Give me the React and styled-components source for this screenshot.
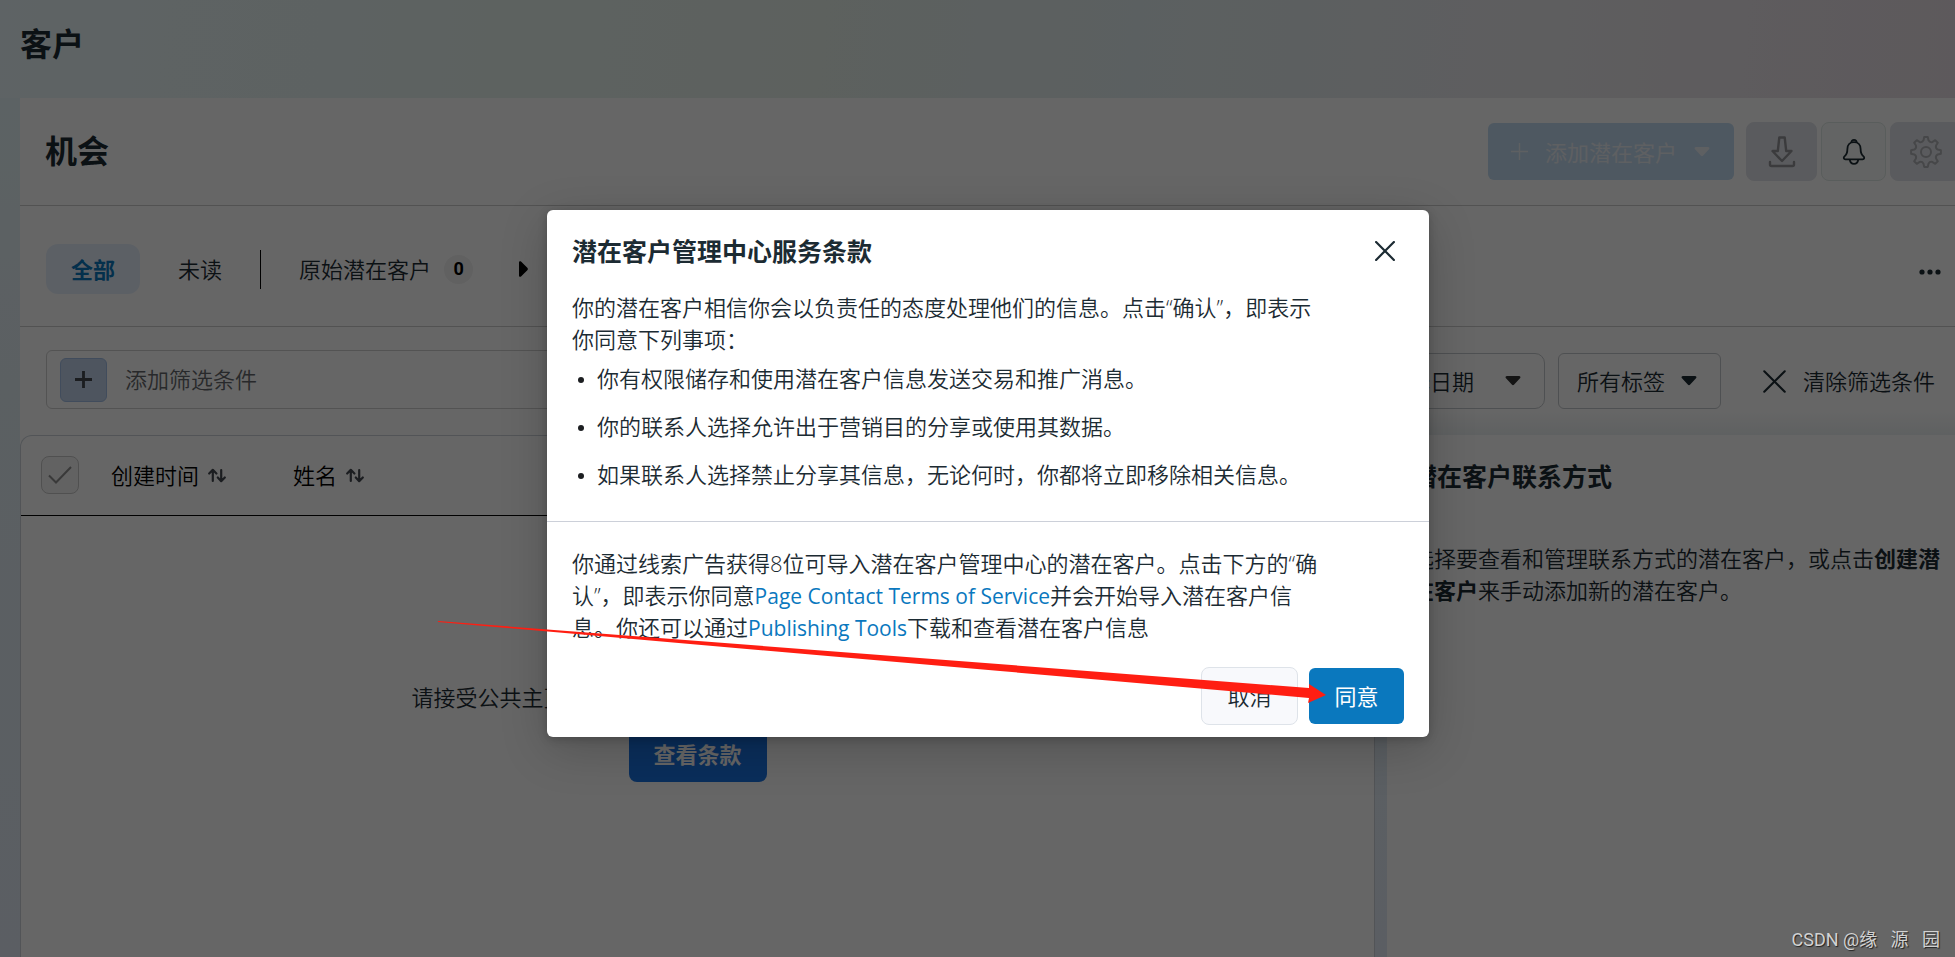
import React from "react";
import styled, { createGlobalStyle } from "styled-components";

const Global = createGlobalStyle`
  *, *::before, *::after { box-sizing: border-box; }
  body { margin: 0; }
  body, button, input, select {
    font-family: "Open Sans", "Noto Sans CJK SC", sans-serif;
    font-size: 22px;
    font-weight: 350;
    line-height: 32px;
    color: #1c2b33;
  }
  button { cursor: pointer; }
  h1, h2, h3, p, ul { margin: 0; padding: 0; }
`;

const Page = styled.div`
  position: relative;
  display: flex;
  flex-direction: column;
  min-height: 100vh;
  overflow: hidden;
  background: linear-gradient(180deg, #e8f8fa 0%, #e4eff6 40%, #e3ecf7 100%);
`;

const PageHeader = styled.header`
  height: 98px;
  padding: 28px 20px 0;
  background: linear-gradient(95deg, #ebf8fc 0%, #e8f5f1 25%, #e8f2ec 42%, #e4f0f2 58%, #ebebee 78%, #e9dfe6 100%);
`;

const Heading = styled.h1`
  padding-bottom: 2px;
  font-size: 32px;
  line-height: 32px;
  font-weight: 700;
`;

const Main = styled.main`
  flex: 1;
  display: flex;
  flex-direction: column;
  margin-left: 20px;
`;

const Card = styled.section`
  background: #fff;
`;

const Bar = styled.div`
  display: flex;
  align-items: center;
  border-bottom: 1px solid #ccc;
`;

const TitleBar = styled(Bar)`
  height: 108px;
  padding-left: 25px;
  justify-content: space-between;
`;

const Actions = styled.div`
  display: flex;
  align-items: center;
  gap: 4px;
  margin-right: -6px;
`;

const AddButton = styled.button`
  display: flex;
  align-items: center;
  gap: 17px;
  width: 246px;
  height: 57px;
  margin-right: 8px;
  padding: 0 23px;
  border: 0;
  border-radius: 6px;
  background: #c2dcf2;
  color: #eceff5;
  font-weight: 400;
`;

const SquareButton = styled.button`
  display: grid;
  place-items: center;
  width: ${(p) => p.$width}px;
  height: 59px;
  padding: 0;
  border: 1px solid ${(p) => p.$border};
  border-radius: 8px;
  background: ${(p) => p.$bg};
  color: ${(p) => p.$color};
`;

const TabBar = styled(Bar)`
  height: 121px;
  padding: 6px 14px 0 26px;
`;

const Tabs = styled.nav`
  display: flex;
  align-items: center;
  gap: 13px;
`;

const Tab = styled.button`
  height: 50px;
  padding: 0 25px;
  border: 0;
  border-radius: 12px;
  background: ${(p) => (p.$active ? "#e7f0fd" : "transparent")};
  color: ${(p) => (p.$active ? "#0a78be" : "#1c2b33")};
  font-weight: ${(p) => (p.$active ? 700 : 350)};
`;

const Separator = styled.span`
  width: 1px;
  height: 39px;
  margin-right: 25px;
  background: #000;
`;

const StageTab = styled.button`
  display: flex;
  align-items: center;
  gap: 13px;
  padding: 0;
  border: 0;
  background: none;
`;

const Badge = styled.span`
  width: 29px;
  height: 29px;
  border-radius: 50%;
  background: #f2f2f2;
  color: #000;
  font-family: Roboto, sans-serif;
  font-size: 18px;
  line-height: 28px;
  font-weight: 700;
`;

const PlainButton = styled.button`
  display: flex;
  align-items: center;
  gap: 17px;
  padding: 0;
  border: 0;
  background: none;
`;

const NextButton = styled(PlainButton)`
  margin-left: 33px;
`;

const MoreButton = styled(PlainButton)`
  margin-left: auto;
  padding-top: 5px;
`;

const FilterBar = styled.div`
  display: flex;
  align-items: flex-end;
  gap: 13px;
  padding: 23px 20px 26px 26px;
  background: linear-gradient(180deg, #fff, #edf2f3) right bottom / 580px 24px no-repeat;
`;

const SearchBox = styled.div`
  flex: 1;
  display: flex;
  align-items: center;
  gap: 18px;
  height: 59px;
  padding: 0 13px;
  border: 1px solid #d0d0d0;
  border-radius: 6px;
`;

const PlusButton = styled.button`
  display: grid;
  place-items: center;
  width: 47px;
  height: 44px;
  padding: 0;
  border: 1px solid #a3bfe6;
  border-radius: 6px;
  background: #c2d4ee;
  color: #444950;
`;

const FilterInput = styled.input`
  flex: 1;
  height: 44px;
  padding: 0 0 2px;
  border: 0;
  background: none;
  &::placeholder { color: #65676b; opacity: 1; }
`;

const SelectBox = styled.div`
  position: relative;
  width: ${(p) => p.$width}px;
  height: 56px;
`;

const Select = styled.select`
  width: 100%;
  height: 100%;
  padding: 0 18px;
  appearance: none;
  border: 1px solid #c4c8cc;
  border-radius: ${(p) => p.$radius}px;
  background: transparent;
`;

const SelectCaret = styled.span`
  position: absolute;
  top: 0;
  bottom: 0;
  right: 24px;
  display: flex;
  align-items: center;
  pointer-events: none;
`;

const ClearButton = styled(PlainButton)`
  height: 56px;
  margin-left: 29px;
`;

const Columns = styled.div`
  flex: 1;
  display: flex;
  align-items: stretch;
`;

const ListWrap = styled.div`
  flex: 1;
  display: flex;
  background: #fff;
`;

const ListPanel = styled.section`
  flex: 1;
  border: 1px solid #ccd3da;
  border-bottom: 0;
  border-top-left-radius: 12px;
  background: #fff;
`;

const Table = styled.table`
  width: 100%;
  border-collapse: collapse;
  border-bottom: 1px solid #000;
  th {
    height: 79px;
    padding: 0;
    text-align: left;
    color: #000;
  }
`;

const CheckCell = styled.th`
  width: 90px;
`;

const CreatedCell = styled.th`
  width: 182px;
`;

const CheckLabel = styled.label`
  position: relative;
  display: block;
  width: 38px;
  height: 38px;
  margin-left: 20px;
  svg {
    position: absolute;
    inset: 0;
    margin: auto;
    pointer-events: none;
  }
`;

const Checkbox = styled.input`
  display: block;
  appearance: none;
  width: 38px;
  height: 38px;
  margin: 0;
  border: 1px solid #c8c8c8;
  border-radius: 8px;
  background: #f5f5f5;
`;

const SortButton = styled(PlainButton)`
  gap: 9px;
  color: #000;
`;

const Empty = styled.div`
  display: flex;
  flex-direction: column;
  align-items: center;
  gap: 13px;
  padding-top: 165px;
`;

const TermsButton = styled.button`
  width: 138px;
  height: 56px;
  padding: 0;
  border: 0;
  border-radius: 8px;
  background: #1b74e4;
  color: #fff;
  font-weight: 700;
`;

const DetailPanel = styled.aside`
  width: 568px;
  margin-left: 12px;
  padding: 25px 0 0 25px;
  background: #fff;
`;

const DetailTitle = styled.h2`
  font-size: 25px;
  line-height: 32px;
  font-weight: 700;
`;

const DetailText = styled.p`
  width: 530px;
  padding-top: 50px;
  b { font-weight: 700; }
`;

const Overlay = styled.div`
  position: absolute;
  inset: 0;
  display: flex;
  align-items: center;
  justify-content: center;
  padding: 0 0 10px 21px;
  background: rgba(0, 0, 0, 0.6);
`;

const Dialog = styled.div`
  position: relative;
  width: 882px;
  border-radius: 6px;
  background: #fff;
  box-shadow: 0 12px 48px rgba(0, 0, 0, 0.2), 0 2px 10px rgba(0, 0, 0, 0.2);
`;

const DialogHeader = styled.div`
  display: flex;
  align-items: center;
  justify-content: space-between;
  padding: 24px 34px 0 25px;
`;

const DialogTitle = styled.h2`
  font-size: 25px;
  line-height: 34px;
  font-weight: 700;
`;

const Terms = styled.div`
  padding: 23px 105px 31px 25px;
  border-bottom: 1px solid #ccd0d9;
`;

const TermsList = styled.ul`
  display: flex;
  flex-direction: column;
  gap: 16px;
  padding: 7px 0 0 6px;
  list-style: none;
`;

const Term = styled.li`
  display: flex;
  align-items: center;
  gap: 13px;
  &::before {
    content: "";
    width: 6px;
    height: 6px;
    margin-top: 4px;
    border-radius: 50%;
    background: #1c1e21;
  }
`;

const Consent = styled.p`
  padding: 25px 105px 0 25px;
`;

const Link = styled.a`
  color: #0a78be;
  font-size: 21px;
  line-height: 21px;
  font-weight: 400;
  text-decoration: none;
`;

const DialogFooter = styled.div`
  display: flex;
  align-items: center;
  justify-content: flex-end;
  gap: 11px;
  padding: 24px 25px 12px;
`;

const CancelButton = styled.button`
  width: 97px;
  height: 58px;
  padding: 0;
  border: 1px solid #dee3e9;
  border-radius: 8px;
  background: #f8f9fc;
`;

const AgreeButton = styled.button`
  width: 95px;
  height: 56px;
  padding: 0;
  border: 0;
  border-radius: 6px;
  background: #0a78be;
  color: #fff;
  font-weight: 400;
`;

const Pointer = styled.svg`
  position: absolute;
  left: -109px;
  top: 410px;
  pointer-events: none;
`;

const Watermark = styled.div`
  position: absolute;
  right: 15px;
  bottom: 2px;
  color: #d2d2d2;
  font-family: Roboto, "Noto Sans CJK SC", sans-serif;
  font-size: 18px;
  line-height: 30px;
  font-weight: 400;
  white-space: pre;
  text-shadow: 1px 1px 1px #222;
`;

const Caret = ({ color = "#1c2b33" }) => (
  <svg width="16" height="10" viewBox="0 0 16 10" fill={color}>
    <path d="M2 0h12c1.300 0 2 1.300 1 2.300L9.200 8.600c-.7.7-1.700.7-2.400 0L1 2.300C0 1.300.7 0 2 0z" />
  </svg>
);

const Plus = ({ size, stroke }) => (
  <svg width={size} height={size} viewBox="0 0 18 18" stroke="currentColor" strokeWidth={stroke} fill="none">
    <path d="M9 0v18M0 9h18" />
  </svg>
);

const Cross = ({ size, stroke = 2 }) => (
  <svg width={size} height={size} viewBox="0 0 22 22" stroke="currentColor" strokeWidth={stroke} strokeLinecap="round" fill="none">
    <path d="M1.200 1.200l19.600 19.600M20.800 1.200L1.200 20.800" />
  </svg>
);

const DownloadIcon = () => (
  <svg width="28" height="32" viewBox="0 0 28 32" fill="none" stroke="currentColor" strokeWidth="2.400" strokeLinejoin="round" strokeLinecap="round">
    <path d="M11.300 1.500h5.400l1.500 13.500H23.500L14 25 4.500 15h5.300z" />
    <path d="M2 26V28.500a1.500 1.500 0 0 0 1.500 1.500h21a1.500 1.500 0 0 0 1.500-1.500V26" />
  </svg>
);

const BellIcon = () => (
  <svg width="24" height="26" viewBox="0 0 24 26" fill="none" stroke="currentColor" strokeWidth="1.800" strokeLinejoin="round">
    <path d="M12 3.200c4.300 0 6.600 3 6.600 6.800 0 4.200 1 5.800 2.900 7.400 1.300 1.200.8 2.900-.9 2.900H3.400c-1.700 0-2.200-1.700-.9-2.900C4.400 15.800 5.400 14.200 5.400 10c0-3.800 2.300-6.800 6.600-6.800z" />
    <path d="M9.400 3.600c0-1.700.9-2.700 2.600-2.700s2.600 1 2.600 2.700M7.800 20.600c.3 2.700 1.900 4.200 4.200 4.200s3.900-1.500 4.200-4.200" />
  </svg>
);

const gearPath = (() => {
  const pts = [];
  for (let i = 0; i < 8; i++) {
    const at = (r, d) => {
      const a = ((i * 45 + d - 90) * Math.PI) / 180;
      return `${(16 + r * Math.cos(a)).toFixed(2)} ${(16 + r * Math.sin(a)).toFixed(2)}`;
    };
    pts.push(`${i ? "L" : "M"}${at(15, -7)}L${at(15, 7)}L${at(12, 12)}Q${at(10, 22.5)} ${at(12, 33)}`);
  }
  return pts.join("") + "Z";
})();

const GearIcon = () => (
  <svg width="32" height="32" viewBox="0 0 32 32" fill="none" stroke="currentColor" strokeWidth="2" strokeLinejoin="round">
    <path d={gearPath} />
    <circle cx="16" cy="16" r="5" />
  </svg>
);

const SortIcon = () => (
  <svg width="18" height="15" viewBox="0 0 18 15" fill="none" stroke="#444950" strokeWidth="2.200" strokeLinecap="round" strokeLinejoin="round">
    <path d="M4.800 13V2M1.200 5.500L4.800 1.800l3.600 3.700M13.200 2v11M9.800 9.500l3.400 3.700 3.600-3.700" />
  </svg>
);

export default function App() {
  return (
    <Page>
      <Global />
      <PageHeader>
        <Heading>客户</Heading>
      </PageHeader>
      <Main>
        <Card>
          <TitleBar>
            <Heading as="h2">机会</Heading>
            <Actions>
              <AddButton type="button" disabled>
                <Plus size={17} stroke={1.5} />
                添加潜在客户
                <Caret color="#eceff5" />
              </AddButton>
              <SquareButton type="button" aria-label="下载" $width={71} $bg="#e2e4ea" $border="#e2e4ea" $color="#939599">
                <DownloadIcon />
              </SquareButton>
              <SquareButton type="button" aria-label="通知" $width={65} $bg="#f8fbf9" $border="#dfe8e5" $color="#1c2b33">
                <BellIcon />
              </SquareButton>
              <SquareButton type="button" aria-label="设置" $width={71} $bg="#e2e4ea" $border="#e2e4ea" $color="#b0b2b6">
                <GearIcon />
              </SquareButton>
            </Actions>
          </TitleBar>
          <TabBar>
            <Tabs>
              <Tab type="button" $active>全部</Tab>
              <Tab type="button">未读</Tab>
              <Separator />
              <StageTab type="button">
                原始潜在客户
                <Badge>0</Badge>
              </StageTab>
              <NextButton type="button" aria-label="展开">
                <svg width="9" height="16" viewBox="0 0 9 16">
                  <path d="M0 1.500C0 .3 1.200-.2 2 .6l6.300 6.200c.7.700.7 1.700 0 2.400L2 15.400c-.8.800-2 .3-2-.9z" />
                </svg>
              </NextButton>
            </Tabs>
            <MoreButton type="button" aria-label="更多">
              <svg width="22" height="6" viewBox="0 0 22 6" fill="#1c2b33">
                <circle cx="3" cy="3" r="2.600" />
                <circle cx="11" cy="3" r="2.600" />
                <circle cx="19" cy="3" r="2.600" />
              </svg>
            </MoreButton>
          </TabBar>
          <FilterBar>
            <SearchBox>
              <PlusButton type="button" aria-label="添加">
                <Plus size={17} stroke={3} />
              </PlusButton>
              <FilterInput aria-label="添加筛选条件" placeholder="添加筛选条件" />
            </SearchBox>
            <SelectBox $width={178}>
              <Select aria-label="选择日期" $radius={10}>
                <option>选择日期</option>
              </Select>
              <SelectCaret><Caret color="#333" /></SelectCaret>
            </SelectBox>
            <SelectBox $width={163}>
              <Select aria-label="所有标签" $radius={6}>
                <option>所有标签</option>
              </Select>
              <SelectCaret><Caret /></SelectCaret>
            </SelectBox>
            <ClearButton type="button">
              <Cross size={23} />
              清除筛选条件
            </ClearButton>
          </FilterBar>
        </Card>
        <Columns>
          <ListWrap>
            <ListPanel>
              <Table>
                <thead>
                  <tr>
                    <CheckCell scope="col">
                      <CheckLabel>
                        <Checkbox type="checkbox" aria-label="全选" />
                        <svg width="24" height="18" viewBox="0 0 24 18" fill="none" stroke="#8f8f8f" strokeWidth="2">
                          <path d="M1 9.500L8 16.500 23 1" />
                        </svg>
                      </CheckLabel>
                    </CheckCell>
                    <CreatedCell scope="col">
                      <SortButton type="button">创建时间<SortIcon /></SortButton>
                    </CreatedCell>
                    <th scope="col">
                      <SortButton type="button">姓名<SortIcon /></SortButton>
                    </th>
                  </tr>
                </thead>
              </Table>
              <Empty>
                <p>请接受公共主页潜在客户管理中心服务条款以查看潜在客户</p>
                <TermsButton type="button">查看条款</TermsButton>
              </Empty>
            </ListPanel>
          </ListWrap>
          <DetailPanel>
            <DetailTitle>潜在客户联系方式</DetailTitle>
            <DetailText>
              选择要查看和管理联系方式的潜在客户，或点击<b>创建潜在客户</b>来手动添加新的潜在客户。
            </DetailText>
          </DetailPanel>
        </Columns>
      </Main>
      <Overlay>
        <Dialog role="dialog" aria-modal="true" aria-labelledby="terms-title">
          <DialogHeader>
            <DialogTitle id="terms-title">潜在客户管理中心服务条款</DialogTitle>
            <PlainButton type="button" aria-label="关闭">
              <Cross size={20} stroke={2.4} />
            </PlainButton>
          </DialogHeader>
          <Terms>
            <p>你的潜在客户相信你会以负责任的态度处理他们的信息。点击“确认”，即表示你同意下列事项：</p>
            <TermsList>
              <Term>你有权限储存和使用潜在客户信息发送交易和推广消息。</Term>
              <Term>你的联系人选择允许出于营销目的分享或使用其数据。</Term>
              <Term>如果联系人选择禁止分享其信息，无论何时，你都将立即移除相关信息。</Term>
            </TermsList>
          </Terms>
          <Consent>
            你通过线索广告获得8位可导入潜在客户管理中心的潜在客户。点击下方的“确认”，即表示你同意<Link href="#page-terms">Page Contact Terms of Service</Link>并会开始导入潜在客户信息。你还可以通过<Link href="#publishing-tools">Publishing Tools</Link>下载和查看潜在客户信息
          </Consent>
          <DialogFooter>
            <CancelButton type="button">取消</CancelButton>
            <AgreeButton type="button">同意</AgreeButton>
          </DialogFooter>
          <Pointer width="890" height="90" viewBox="0 0 890 90" fill="#ff1e12" aria-hidden="true">
            <path d="M0 1L871 68V64L888 75 870 83 871 78 562 51 0 2z" />
          </Pointer>
        </Dialog>
      </Overlay>
      <Watermark>{"CSDN @缘   源   园"}</Watermark>
    </Page>
  );
}
